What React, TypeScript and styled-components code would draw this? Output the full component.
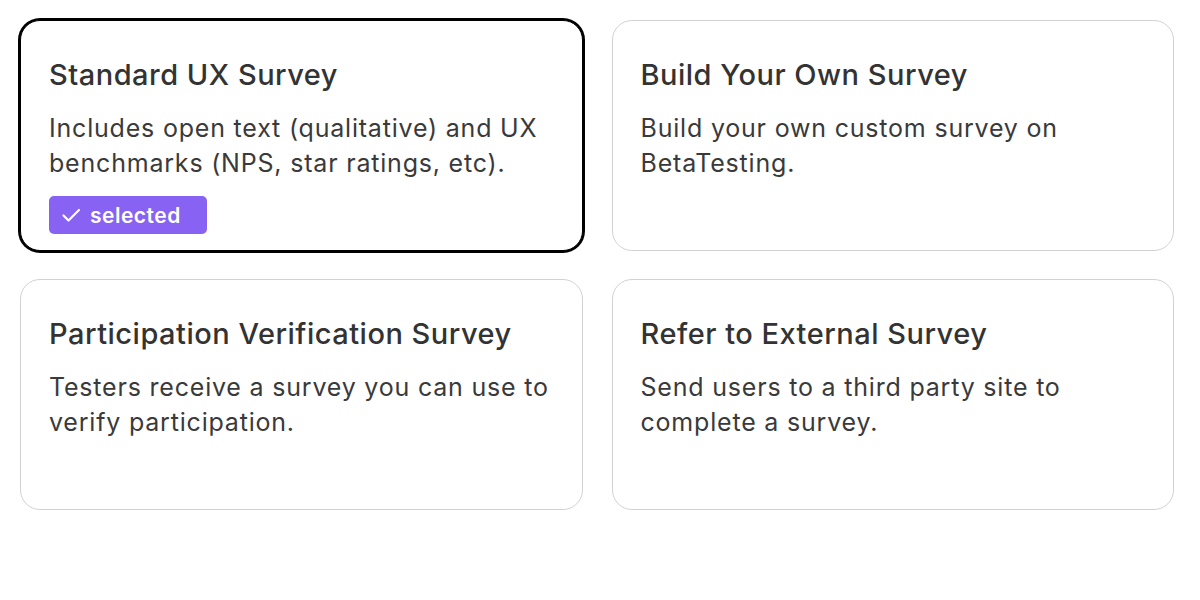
import React from "react";
import styled, { createGlobalStyle } from "styled-components";

const Global = createGlobalStyle`
  html, body { margin: 0; padding: 0; background: #ffffff; }
  body { font-family: Inter, "Noto Sans", sans-serif; color: #333333; }
`;

const Grid = styled.div`
  display: grid;
  grid-template-columns: 1fr 1fr;
  column-gap: 29px;
  row-gap: 28px;
  padding: 20px 26px 0 20px;
`;

const Card = styled.div<{ $selected?: boolean }>`
  box-sizing: border-box;
  min-height: 231px;
  border: 1px solid ${(p) => (p.$selected ? "#000000" : "#d2d2d2")};
  box-shadow: ${(p) => (p.$selected ? "0 0 0 2px #000000" : "none")};
  border-radius: 20px;
  padding: 36px 28px 16px 28px;
  display: flex;
  flex-direction: column;
  align-items: flex-start;
  background: #fff;
`;

const Title = styled.h2`
  margin: 0;
  font-size: 29px;
  font-weight: 500;
  line-height: 36px;
  letter-spacing: 0.5px;
  color: #333333;
`;

const Desc = styled.p`
  margin: 18px 0 0 0;
  font-size: 25px;
  font-weight: 400;
  line-height: 35px;
  letter-spacing: 0.8px;
  color: #3a3a3a;
`;

const Badge = styled.div`
  margin-top: 15px;
  display: inline-flex;
  align-items: center;
  gap: 9px;
  height: 38px;
  box-sizing: border-box;
  padding: 0 26px 0 12px;
  background: #8862f2;
  border-radius: 5px;
  color: #ffffff;
  font-size: 21px;
  font-weight: 600;
  letter-spacing: 0.5px;
`;

const Check = () => (
  <svg width="20" height="20" viewBox="0 0 20 20" fill="none" stroke="#fff" strokeWidth="2.2" strokeLinecap="round" strokeLinejoin="round">
    <path d="M2.5 10.5l5 5L18 5" />
  </svg>
);

const cards = [
  {
    title: "Standard UX Survey",
    desc: "Includes open text (qualitative) and UX benchmarks (NPS, star ratings, etc).",
    selected: true,
  },
  {
    title: "Build Your Own Survey",
    desc: "Build your own custom survey on BetaTesting.",
  },
  {
    title: "Participation Verification Survey",
    desc: "Testers receive a survey you can use to verify participation.",
  },
  {
    title: "Refer to External Survey",
    desc: "Send users to a third party site to complete a survey.",
  },
];

export default function App() {
  return (
    <>
      <Global />
      <Grid>
        {cards.map((c) => (
          <Card key={c.title} $selected={c.selected}>
            <Title>{c.title}</Title>
            <Desc>{c.desc}</Desc>
            {c.selected && (
              <Badge>
                <Check />
                selected
              </Badge>
            )}
          </Card>
        ))}
      </Grid>
    </>
  );
}
